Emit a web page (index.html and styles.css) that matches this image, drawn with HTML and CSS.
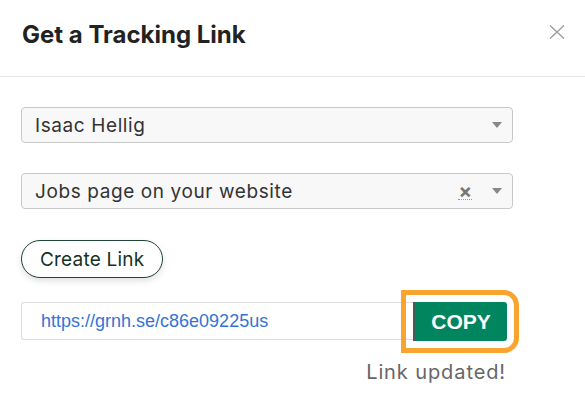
FILE: index.html
```html
<!DOCTYPE html>
<html lang="en">
<head>
<meta charset="utf-8">
<title>Get a Tracking Link</title>
<link rel="stylesheet" href="styles.css">
</head>
<body>
<div class="modal">
  <header class="modal-header">
    <h1 class="title">Get a Tracking Link</h1>
    <button class="close" aria-label="Close">
      <svg width="16" height="16" viewBox="0 0 16 16"><path d="M1 1.5L15 14.5M15 1.5L1 14.5" stroke="#9a9a9a" stroke-width="1.3" fill="none"/></svg>
    </button>
  </header>
  <div class="modal-body">
    <div class="select">
      <span class="select-value">Isaac Hellig</span>
      <span class="arrow"></span>
    </div>
    <div class="select">
      <span class="select-value">Jobs page on your website</span>
      <span class="clear">×</span>
      <span class="arrow"></span>
    </div>
    <div class="actions">
      <button class="create">Create Link</button>
    </div>
    <div class="link-row">
      <div class="link-input">https://grnh.se/c86e09225us</div>
      <button class="copy">COPY</button>
    </div>
    <div class="status">Link updated!</div>
  </div>
</div>
</body>
</html>
```
FILE: styles.css
```css
* { box-sizing: border-box; }
html, body { margin: 0; padding: 0; background: #fff; }
body { font-family: "Inter", "Liberation Sans", sans-serif; color: #333; }

.modal { width: 585px; height: 414px; }

.modal-header {
  height: 77px;
  border-bottom: 1px solid #e2e2e2;
  display: flex;
  align-items: flex-start;
  justify-content: space-between;
  padding: 0 20px 0 22px;
}
.title {
  margin: 20px 0 0;
  font-size: 24px;
  font-weight: 700;
  color: #222;
  letter-spacing: 0;
}
.close {
  margin-top: 24px;
  border: 0;
  background: none;
  padding: 0;
  width: 16px;
  height: 16px;
}

.modal-body {
  padding: 30px 72px 0 21px;
  display: flex;
  flex-direction: column;
}

.select {
  height: 36px;
  border: 1px solid #c8c8c8;
  border-radius: 4px;
  background: #f8f8f8;
  display: flex;
  align-items: center;
  padding: 0 10px 0 13px;
  margin-bottom: 30px;
}
.select-value {
  flex: 1;
  font-size: 19px;
  letter-spacing: 0.6px;
  color: #333;
}
.arrow {
  width: 0; height: 0;
  border-left: 5px solid transparent;
  border-right: 5px solid transparent;
  border-top: 6px solid #888;
}
.clear {
  font-size: 20px;
  font-weight: 700;
  color: #777;
  margin-right: 20px;
  line-height: 16px;
  border-bottom: 1px dotted #999;
}

.actions { display: flex; margin-top: 1px; }
.create {
  height: 38px;
  padding: 0 18px;
  border: 1px solid #1e4535;
  border-radius: 19px;
  background: #fff;
  color: #14321f;
  font-family: "Inter", "Liberation Sans", sans-serif;
  font-size: 19px;
  letter-spacing: 0.2px;
  box-shadow: 0 3px 6px rgba(0,0,0,0.12);
}

.link-row {
  display: flex;
  margin-top: 24px;
  height: 39px;
  margin-right: 6px;
}
.link-input {
  flex: 1;
  border: 1px solid #dddddd;
  border-right: 0;
  border-radius: 3px 0 0 3px;
  height: 38px;
  display: flex;
  align-items: center;
  padding-left: 19px;
  font-family: "Liberation Sans", Arial, sans-serif;
  font-size: 18px;
  color: #3473d6;
}
.copy {
  width: 94px;
  height: 39px;
  border: 0;
  border-left: 2px solid #4d5a55;
  border-radius: 0 3px 3px 0;
  background: #00855e;
  color: #fff;
  font-family: "Liberation Sans", Arial, sans-serif;
  font-weight: 700;
  font-size: 21px;
  outline: 5px solid #f9a42f;
  outline-offset: 7px;
}

.status {
  align-self: flex-end;
  margin-top: 19px;
  margin-right: 7px;
  font-size: 20px;
  letter-spacing: 0.9px;
  color: #666;
}
```
